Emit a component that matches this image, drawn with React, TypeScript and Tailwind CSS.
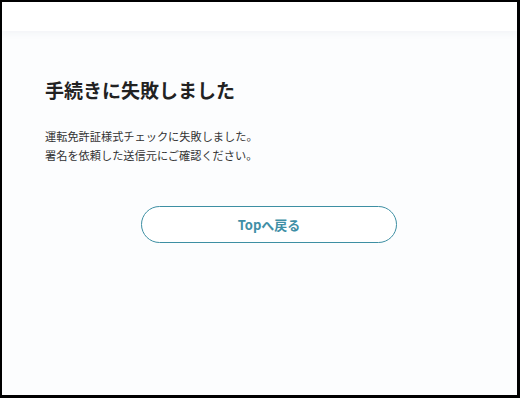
export default function App() {
  return (
    <div
      className="w-[520px] h-[398px] border-l-2 border-t-2 border-r-[3px] border-b-[3px] border-black bg-[#fcfdfe] flex flex-col"
      style={{ fontFamily: '"Noto Sans CJK JP", "Noto Sans", sans-serif' }}
    >
      <header className="h-[29px] bg-white shadow-[0_2px_8px_rgba(30,50,90,0.05)]" />
      <main className="pl-[43px] pr-[24px] pt-[44px]">
        <h1 className="text-[19px] leading-[30px] font-bold text-[#222]">手続きに失敗しました</h1>
        <p className="mt-[22px] text-[11.2px] leading-[19px] text-[#333]">
          運転免許証様式チェックに失敗しました。
          <br />
          署名を依頼した送信元にご確認ください。
        </p>
        <div className="flex justify-center mt-[41px]">
          <button className="w-[256px] h-[37px] rounded-full border border-[#3d8fa3] bg-white text-[13px] font-bold text-[#3f8fa6]">
            Topへ戻る
          </button>
        </div>
      </main>
    </div>
  )
}
